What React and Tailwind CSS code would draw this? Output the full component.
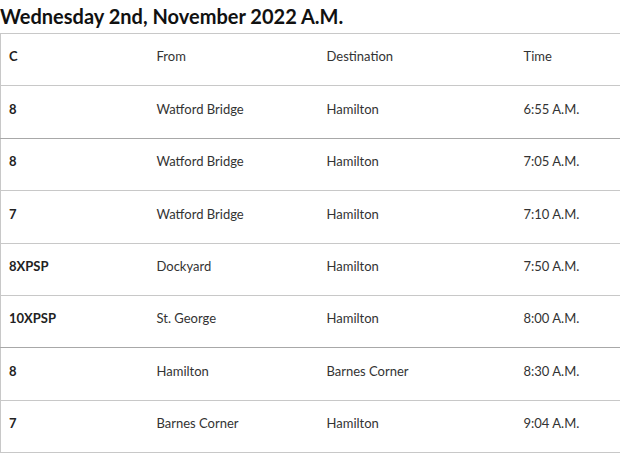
import React from "react";

const rows = [
  ["8", "Watford Bridge", "Hamilton", "6:55 A.M."],
  ["8", "Watford Bridge", "Hamilton", "7:05 A.M."],
  ["7", "Watford Bridge", "Hamilton", "7:10 A.M."],
  ["8XPSP", "Dockyard", "Hamilton", "7:50 A.M."],
  ["10XPSP", "St. George", "Hamilton", "8:00 A.M."],
  ["8", "Hamilton", "Barnes Corner", "8:30 A.M."],
  ["7", "Barnes Corner", "Hamilton", "9:04 A.M."],
];

const App = () => {
  return (
    <div className="bg-white min-h-screen font-['Lato',sans-serif] text-[#222]">
      <h2 className="text-[20px] font-bold leading-[33px] h-[33px] text-[#111]">
        Wednesday 2nd, November 2022 A.M.
      </h2>
      <table className="w-[620px] border-collapse border border-[#c8c8c8] text-[13px] table-fixed">
        <colgroup>
          <col className="w-[148px]" />
          <col className="w-[170px]" />
          <col className="w-[197px]" />
          <col className="w-[105px]" />
        </colgroup>
        <tbody>
          <tr className="h-[52.4px] border-b border-[#c8c8c8]">
            <td className="pl-2 pb-[5px] font-bold">C</td>
            <td className="pl-2 pb-[5px] text-[#333]">From</td>
            <td className="pl-2 pb-[5px] text-[#333]">Destination</td>
            <td className="pl-2 pb-[5px] text-[#333]">Time</td>
          </tr>
          {rows.map((r, i) => (
            <tr
              key={i}
              className={`h-[52.4px] border-b ${i === 0 || i === 4 ? "border-[#a8a8a8]" : "border-[#c8c8c8]"}`}
            >
              <td className="pl-2 pb-[5px] font-bold">{r[0]}</td>
              <td className="pl-2 pb-[5px] text-[#333]">{r[1]}</td>
              <td className="pl-2 pb-[5px] text-[#333]">{r[2]}</td>
              <td className="pl-2 pb-[5px] text-[#333]">{r[3]}</td>
            </tr>
          ))}
        </tbody>
      </table>
    </div>
  );
};

export default App;
